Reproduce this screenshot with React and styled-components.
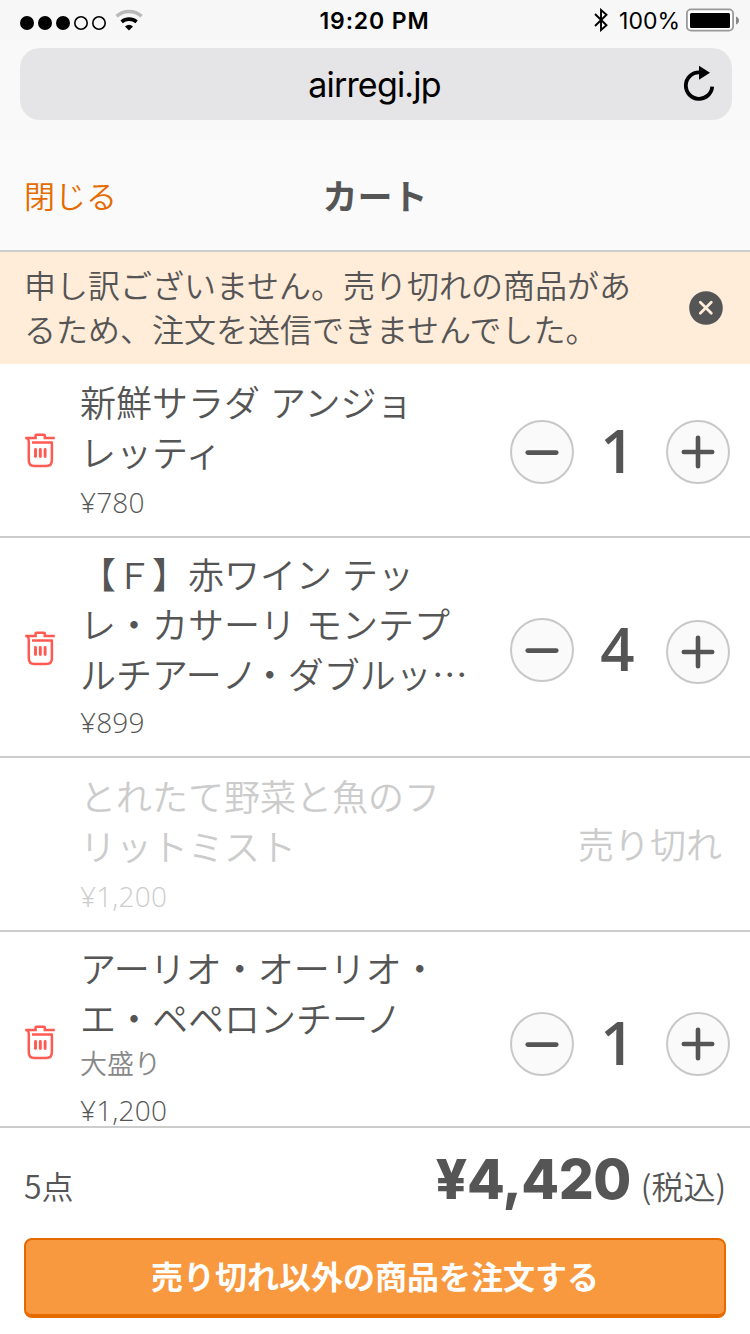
import React from 'react';
import styled, { createGlobalStyle } from 'styled-components';

const GlobalStyle = createGlobalStyle`
  * {
    box-sizing: border-box;
  }
  body {
    margin: 0;
    background: #fff;
    color: #555;
    font-family: 'Noto Sans CJK JP', sans-serif;
    font-weight: 350;
  }
  button {
    font: inherit;
    color: inherit;
    margin: 0;
    padding: 0;
    border: 0;
    background: none;
  }
  svg {
    display: block;
  }
`
const Screen = styled.div`
  width: 750px;
  height: 1334px;
  display: flex;
  flex-direction: column;
  overflow: hidden;
`
const StatusBar = styled.div`
  flex: none;
  height: 40px;
  display: grid;
  grid-template-columns: 1fr auto 1fr;
  align-items: center;
  padding: 0 11px 0 20px;
  background: #f7f7f7;
  color: #000;
  font-family: Inter, sans-serif;
  font-size: 24px;
`
const Signal = styled.div`
  display: flex;
`
const Clock = styled.div`
  padding-top: 1px;
  font-weight: 600;
  font-size: 23px;
  letter-spacing: 0.85px;
  margin-left: -10px;
`
const Power = styled.div`
  display: flex;
  justify-content: flex-end;
  align-items: center;
`
const Percent = styled.span`
  padding-top: 1px;
  font-weight: 400;
  font-size: 23px;
  margin: 0 6px 0 11px;
`
const Browser = styled.div`
  flex: none;
  height: 100px;
  padding: 8px 18px 20px 20px;
  background: #f9f9f9;
`
const Address = styled.div`
  height: 72px;
  display: grid;
  grid-template-columns: 1fr auto 1fr;
  align-items: center;
  padding: 0 16px;
  border-radius: 20px;
  background: #e5e5e7;
  color: #000;
  font-family: Inter, sans-serif;
  font-weight: 400;
  font-size: 34px;
`
const Url = styled.span`
  grid-column: 2;
  margin-left: -3px;
  letter-spacing: -0.8px;
`
const Reload = styled.button`
  justify-self: end;
`
const Header = styled.header`
  flex: none;
  height: 112px;
  display: grid;
  grid-template-columns: 1fr auto 1fr;
  align-items: center;
  padding: 0 24px 1px;
  border-bottom: 2px solid #ccc;
  background: #fafafa;
`
const Close = styled.button`
  justify-self: start;
  color: #e56a00;
  font-size: 31px;
`
const Title = styled.h1`
  margin: 0;
  font-size: 35px;
  font-weight: 700;
`
const Notice = styled.div`
  flex: none;
  height: 112px;
  display: flex;
  align-items: center;
  justify-content: space-between;
  padding: 0 27px 0 24px;
  background: #ffecd9;
`
const NoticeText = styled.p`
  margin: -4px 0 0;
  font-size: 32px;
  line-height: 44px;
`
const Items = styled.ul`
  flex: none;
  height: 764px;
  margin: 0;
  padding: 0;
  overflow: hidden;
  list-style: none;
`
const Item = styled.li`
  height: ${p => p.$height}px;
  display: flex;
  border-bottom: 2px solid #ccc;
  color: ${p => (p.$soldOut ? '#ccc' : '#555')};
`
const Side = styled.div`
  flex: none;
  width: 80px;
  padding: ${p => p.$top}px 0 0 25px;
`
const Detail = styled.div`
  flex: none;
  width: 430px;
  padding-top: ${p => p.$top}px;
`
const Name = styled.div`
  font-size: 36px;
  line-height: 50px;
  white-space: nowrap;
  word-spacing: 2px;
`
const Tight = styled.span`
  letter-spacing: ${p => p.$by}px;
`
const Option = styled.div`
  margin-bottom: -1px;
  padding-top: 1px;
  font-size: 27px;
  line-height: 40px;
  color: #888;
`
const Price = styled.div`
  margin-top: ${p => p.$gap}px;
  font-family: 'Open Sans', sans-serif;
  font-weight: 350;
  font-size: 28px;
  line-height: 40px;
  letter-spacing: 0.2px;
`
const Stepper = styled.div`
  flex: none;
  width: 220px;
  display: flex;
  align-items: flex-start;
  padding-top: ${p => p.$top}px;
`
const Round = styled.button`
  flex: none;
  width: 64px;
  height: 64px;
  display: flex;
  align-items: center;
  justify-content: center;
  margin-top: ${p => p.$drop || 0}px;
  border: 2px solid #c8c8c8;
  border-radius: 50%;
  background: #fafafa;
`
const Count = styled.span`
  flex: 1;
  margin-top: -2px;
  padding-right: 5px;
  text-align: center;
  font-family: 'Open Sans', sans-serif;
  font-weight: 560;
  font-size: 60px;
  line-height: 64px;
`
const SoldOut = styled.div`
  flex: 1;
  padding: 59px 28px 0 0;
  text-align: right;
  font-size: 36px;
  line-height: 52px;
`
const Footer = styled.footer`
  flex: none;
  height: 206px;
  padding: 0 24px 16px;
  display: flex;
  flex-direction: column;
  justify-content: space-between;
`
const Summary = styled.div`
  height: 100px;
  display: flex;
  align-items: baseline;
  justify-content: space-between;
  padding-top: 19px;
  font-size: 32px;
`
const Total = styled.strong`
  margin-right: 10px;
  font-family: Inter, sans-serif;
  font-weight: 800;
  font-size: 55px;
  line-height: 64px;
  letter-spacing: -0.5px;
`
const Order = styled.button`
  height: 80px;
  padding-bottom: 4px;
  border: 2px solid #e56a00;
  border-bottom-width: 4px;
  border-radius: 8px;
  background: #f9993f;
  color: #fff;
  font-size: 32px;
  font-weight: 700;
`

const SignalIcon = () => (
  <svg width="124" height="28" viewBox="0 0 124 28">
    <circle cx="7" cy="17" r="7" />
    <circle cx="25" cy="17" r="7" />
    <circle cx="43" cy="17" r="7" />
    <circle cx="61" cy="17" r="6.2" fill="none" stroke="#000" strokeWidth="1.6" />
    <circle cx="79" cy="17" r="6.2" fill="none" stroke="#000" strokeWidth="1.6" />
    <path d="M96.6 10.3a18.5 18.5 0 0 1 25 0" fill="none" stroke="#b9b9b9" strokeWidth="3.4" />
    <path d="M101.6 15.9a11.5 11.5 0 0 1 15 0" fill="none" stroke="#000" strokeWidth="3.6" />
    <path d="M105 20.4a6.2 6.2 0 0 1 8 0l-4 4z" />
  </svg>
)

const BluetoothIcon = () => (
  <svg width="14" height="24" viewBox="0 0 14 24">
    <path d="M1 6l11.5 11.2L7 22V2l5.5 4.8L1 18" fill="none" stroke="#000" strokeWidth="1.9" />
  </svg>
)

const BatteryIcon = () => (
  <svg width="53" height="24" viewBox="0 0 53 24">
    <rect x="0.9" y="1.4" width="46.2" height="21.2" rx="4" fill="#fff" stroke="#999" strokeWidth="1.8" />
    <rect x="4" y="5" width="40" height="15" rx="1.5" />
    <path d="M50 8.4q3 1.2 3 4t-3 4z" fill="#888" />
  </svg>
)

const ReloadIcon = () => (
  <svg width="34" height="38" viewBox="0 0 34 38">
    <path d="M30.2 21.6A13.2 13.2 0 1 1 17 7.4" fill="none" stroke="#000" strokeWidth="3.8" />
    <path d="M17 0.8v14l11-7z" />
  </svg>
)

const DismissIcon = () => (
  <svg width="34" height="34" viewBox="0 0 34 34">
    <circle cx="17" cy="17" r="16.8" fill="#555" />
    <path d="M11.3 11.3l11 11m0-11l-11 11" stroke="#ffecd9" strokeWidth="2.8" strokeLinecap="round" />
  </svg>
)

const TrashIcon = () => (
  <svg width="30" height="35" viewBox="0 0 30 35" fill="none" stroke="#ff5a52" strokeWidth="2.5">
    <path d="M0.2 5.1H10.6V2.6Q10.6 1.8 11.4 1.8H19Q19.8 1.8 19.8 2.6V5.1H29.8" />
    <path d="M2 5.2Q3.8 6.2 3.8 9V27.5Q3.8 33 9.5 33H21.2Q26.9 33 26.9 27.5V9.4H7" strokeLinejoin="round" />
    <path d="M10.5 16.5v7M15.3 16.5v7M20.1 16.5v7" strokeWidth="2.9" strokeLinecap="round" />
  </svg>
)

const MinusIcon = () => (
  <svg width="34" height="34" viewBox="0 0 34 34" stroke="#555" strokeWidth="4.8" strokeLinecap="round">
    <path d="M2.8 17.6h28.4" />
  </svg>
)

const PlusIcon = () => (
  <svg width="34" height="34" viewBox="0 0 34 34" stroke="#555" strokeWidth="4.6" strokeLinecap="round">
    <path d="M2.8 17h28.4M17 2.8v28.4" />
  </svg>
)

const items = [
  {
    id: 1,
    name: <>新鮮サラダ アンジョ<br />レッティ</>,
    price: '¥780',
    count: 1,
    height: 174,
    top: 12,
    gap: 6,
    trash: 69,
    stepper: 56,
  },
  {
    id: 2,
    name: <>【Ｆ】赤ワイン テッ<br />レ・カサーリ モンテプ<br />ルチアー<Tight $by={-6}>ノ</Tight>・ダブルッ…</>,
    price: '¥899',
    count: 4,
    height: 220,
    top: 10,
    gap: 4,
    trash: 93,
    stepper: 80,
    drop: 2,
  },
  {
    id: 3,
    name: <>とれたて野菜と魚のフ<br />リットミスト</>,
    price: '¥1,200',
    soldOut: true,
    height: 174,
    top: 12,
    gap: 6,
  },
  {
    id: 4,
    name: <>アーリオ・オーリオ・<br />エ・ペペロンチーノ</>,
    option: '大盛り',
    price: '¥1,200',
    count: 1,
    height: 196,
    top: 10,
    gap: 8,
    trash: 93,
    stepper: 80,
  },
]

const CartItem = ({ item }) => {
  return (
    <Item $height={item.height} $soldOut={item.soldOut}>
      <Side $top={item.trash || 0}>
        {!item.soldOut && <button><TrashIcon /></button>}
      </Side>
      <Detail $top={item.top}>
        <Name>{item.name}</Name>
        {item.option && <Option>{item.option}</Option>}
        <Price $gap={item.gap}>{item.price}</Price>
      </Detail>
      {item.soldOut ? (
        <SoldOut>売り切れ</SoldOut>
      ) : (
        <Stepper $top={item.stepper}>
          <Round><MinusIcon /></Round>
          <Count>{item.count}</Count>
          <Round $drop={item.drop}><PlusIcon /></Round>
        </Stepper>
      )}
    </Item>
  )
}

const App = () => {
  return (
    <Screen>
      <GlobalStyle />
      <StatusBar>
        <Signal><SignalIcon /></Signal>
        <Clock>19:20 PM</Clock>
        <Power>
          <BluetoothIcon />
          <Percent>100%</Percent>
          <BatteryIcon />
        </Power>
      </StatusBar>
      <Browser>
        <Address>
          <Url>airregi.jp</Url>
          <Reload><ReloadIcon /></Reload>
        </Address>
      </Browser>
      <Header>
        <Close>閉じる</Close>
        <Title>カート</Title>
      </Header>
      <Notice>
        <NoticeText>申し訳ございません。売り切れの商品があ<br />るため、注文を送信できませんでした。</NoticeText>
        <button><DismissIcon /></button>
      </Notice>
      <Items>
        {items.map(item => <CartItem key={item.id} item={item} />)}
      </Items>
      <Footer>
        <Summary>
          <span>5点</span>
          <span><Total>¥4,420</Total>(税込)</span>
        </Summary>
        <Order>売り切れ以外の商品を注文する</Order>
      </Footer>
    </Screen>
  )
}

export default App;
